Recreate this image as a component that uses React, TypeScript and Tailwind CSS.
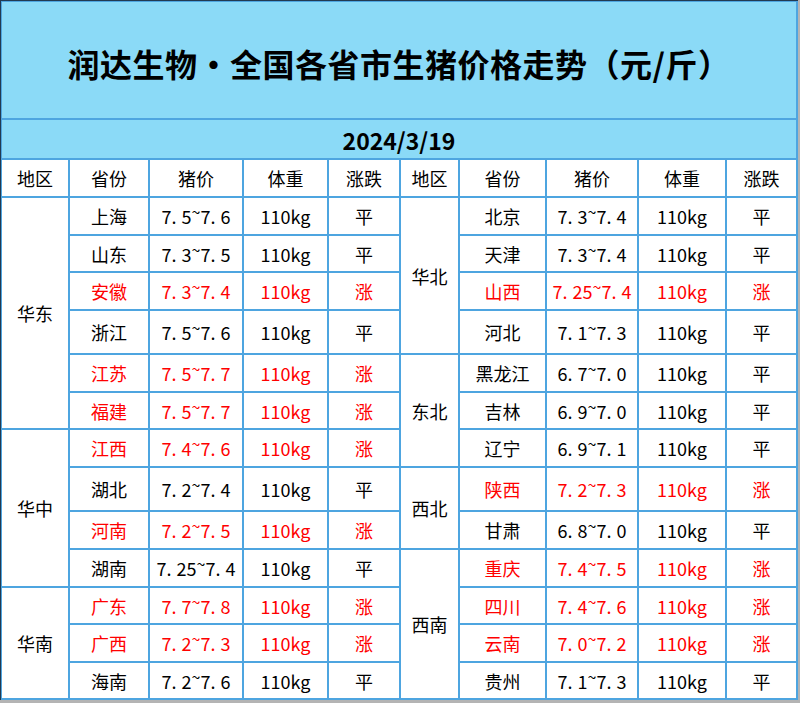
import React from "react";

type Cell = [string, string, string];
type Row = {
  lr?: [string, number];
  l: Cell;
  rr?: [string, number];
  r: Cell;
};

const UP = "涨";

const rows: Row[] = [
  { lr: ["华东", 6], l: ["上海", "7.5~7.6", "平"], rr: ["华北", 4], r: ["北京", "7.3~7.4", "平"] },
  { l: ["山东", "7.3~7.5", "平"], r: ["天津", "7.3~7.4", "平"] },
  { l: ["安徽", "7.3~7.4", "涨"], r: ["山西", "7.25~7.4", "涨"] },
  { l: ["浙江", "7.5~7.6", "平"], r: ["河北", "7.1~7.3", "平"] },
  { l: ["江苏", "7.5~7.7", "涨"], rr: ["东北", 3], r: ["黑龙江", "6.7~7.0", "平"] },
  { l: ["福建", "7.5~7.7", "涨"], r: ["吉林", "6.9~7.0", "平"] },
  { lr: ["华中", 4], l: ["江西", "7.4~7.6", "涨"], r: ["辽宁", "6.9~7.1", "平"] },
  { l: ["湖北", "7.2~7.4", "平"], rr: ["西北", 2], r: ["陕西", "7.2~7.3", "涨"] },
  { l: ["河南", "7.2~7.5", "涨"], r: ["甘肃", "6.8~7.0", "平"] },
  { l: ["湖南", "7.25~7.4", "平"], rr: ["西南", 4], r: ["重庆", "7.4~7.5", "涨"] },
  { lr: ["华南", 3], l: ["广东", "7.7~7.8", "涨"], r: ["四川", "7.4~7.6", "涨"] },
  { l: ["广西", "7.2~7.3", "涨"], r: ["云南", "7.0~7.2", "涨"] },
  { l: ["海南", "7.2~7.6", "平"], r: ["贵州", "7.1~7.3", "平"] },
];

const spanClass: Record<number, string> = {
  2: "row-span-2",
  3: "row-span-3",
  4: "row-span-4",
  6: "row-span-6",
};

function Price({ v }: { v: string }) {
  return (
    <span className="whitespace-nowrap">
      {v.split("").map((ch, i) => {
        if (ch === ".")
          return (
            <span key={i} className="mr-[5px]">
              .
            </span>
          );
        if (ch === "~")
          return (
            <span key={i} className="relative -top-[6px] text-[16px]">
              ~
            </span>
          );
        return <span key={i}>{ch}</span>;
      })}
    </span>
  );
}

const cellBase = "bg-white flex items-center justify-center text-[18px] leading-none";

function DataCells({ c }: { c: Cell }) {
  const red = c[2] === UP;
  const color = red ? "text-[#ff0000]" : "text-black";
  return (
    <>
      <div className={`${cellBase} ${color}`}>{c[0]}</div>
      <div className={`${cellBase} ${color}`}>
        <Price v={c[1]} />
      </div>
      <div className={`${cellBase} ${color}`}>110kg</div>
      <div className={`${cellBase} ${color}`}>{c[2]}</div>
    </>
  );
}

export default function App() {
  const headers = ["地区", "省份", "猪价", "体重", "涨跌", "地区", "省份", "猪价", "体重", "涨跌"];
  return (
    <div className="w-[800px] h-[703px] bg-[#b4b4b4] font-['Noto_Sans_CJK_SC',sans-serif]">
      <div className="w-[798px] h-[700px] bg-[#4ea5e0] border-t border-l border-[#223a52] pt-[1px] pl-[1px] pr-[2px] pb-[2px] grid gap-[2px] grid-cols-[66px_78px_92px_83px_70px_57px_85px_90px_86px_69px] grid-rows-[116px_38px_36px_36px_35px_36px_42px_36px_35px_36px_42px_36px_36px_35px_36px_35px]">
        <div className="col-span-10 bg-[#8bdaf7] flex items-center justify-center pt-[6px] text-[32px] font-bold text-black tracking-[0.5px]">
          润达生物·全国各省市生猪价格走势（元/斤）
        </div>
        <div className="col-span-10 bg-[#8bdaf7] flex items-center justify-center pt-[2px] text-[23px] font-bold text-black">
          2024/3/19
        </div>
        {headers.map((h, i) => (
          <div key={i} className={`${cellBase} text-black`}>
            {h}
          </div>
        ))}
        {rows.map((r, i) => (
          <React.Fragment key={i}>
            {r.lr && (
              <div className={`${cellBase} ${spanClass[r.lr[1]]} text-black`}>{r.lr[0]}</div>
            )}
            <DataCells c={r.l} />
            {r.rr && (
              <div className={`${cellBase} ${spanClass[r.rr[1]]} text-black`}>{r.rr[0]}</div>
            )}
            <DataCells c={r.r} />
          </React.Fragment>
        ))}
      </div>
    </div>
  );
}
